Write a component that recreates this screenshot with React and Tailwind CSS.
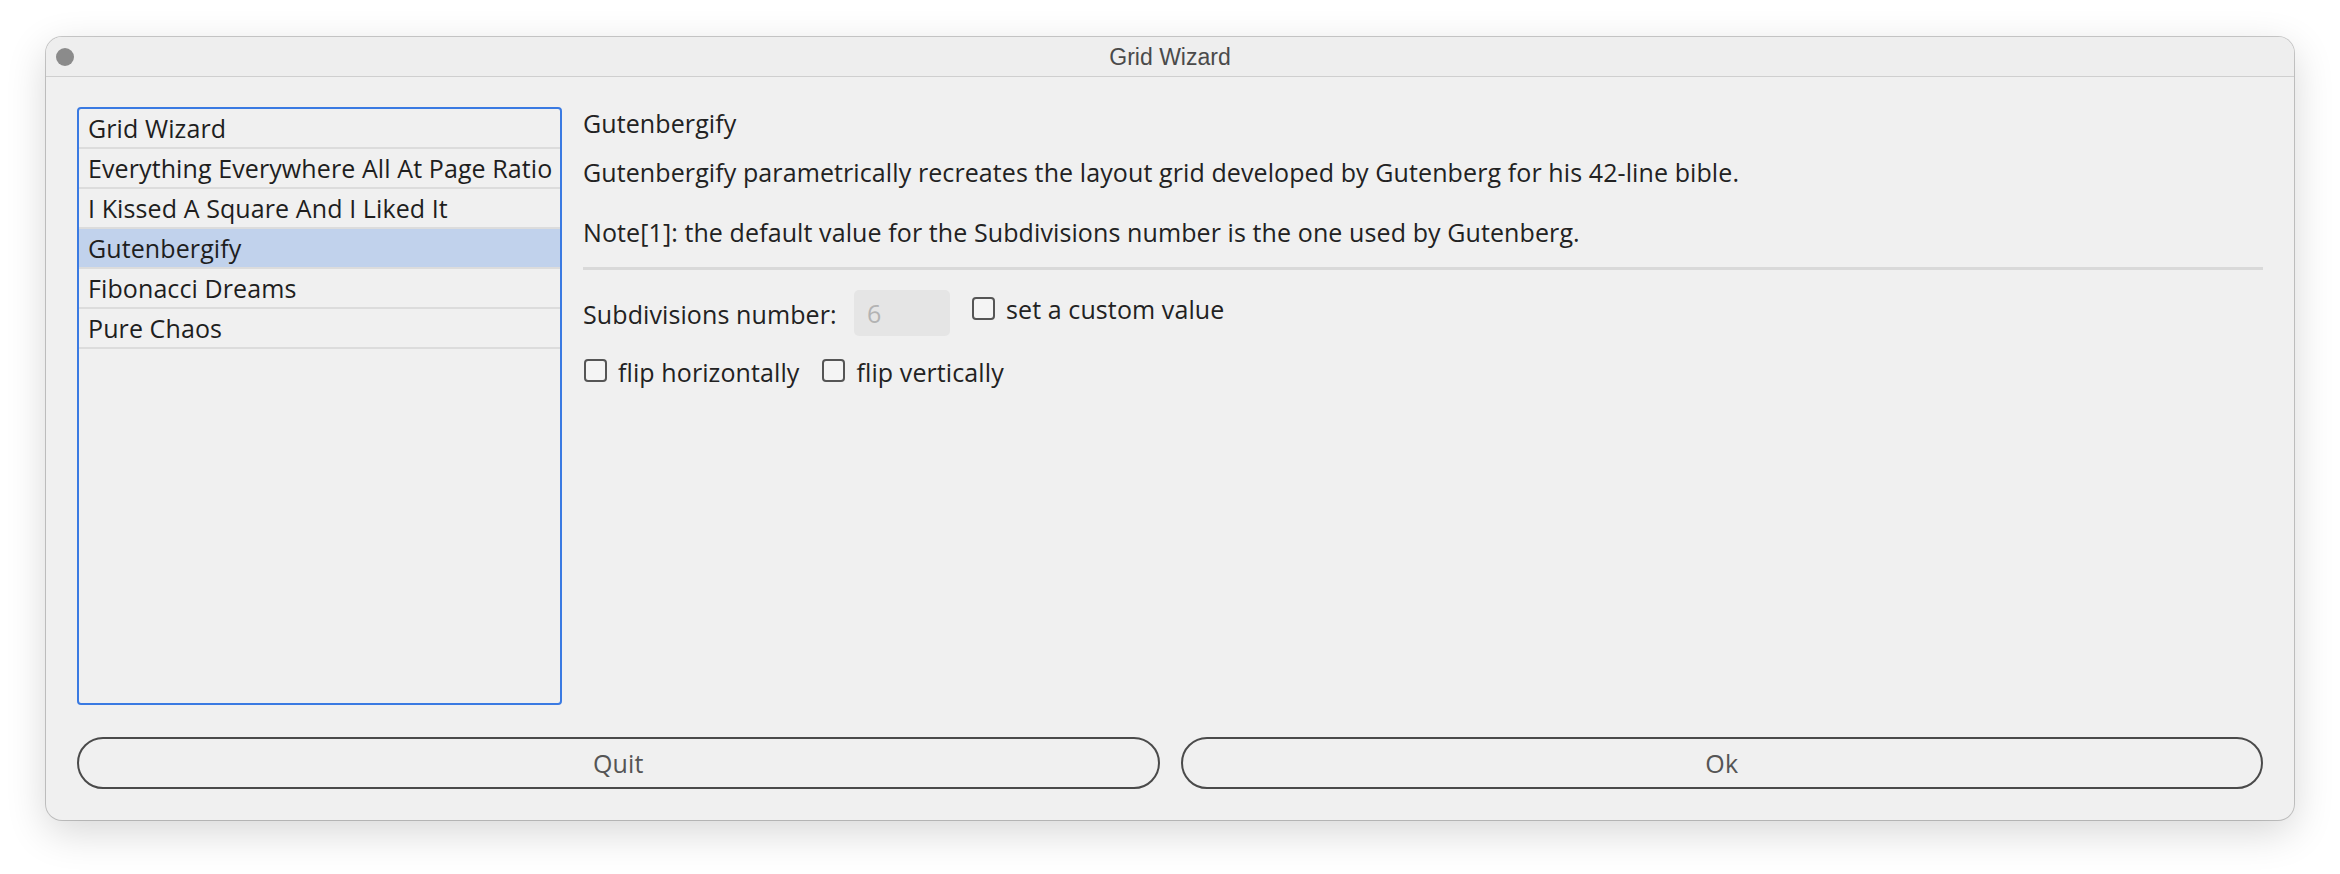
import React from "react";

const items = [
  "Grid Wizard",
  "Everything Everywhere All At Page Ratio",
  "I Kissed A Square And I Liked It",
  "Gutenbergify",
  "Fibonacci Dreams",
  "Pure Chaos",
];

const body = { fontFamily: '"Open Sans", "Noto Sans", sans-serif' };

const CheckBox = ({ className = "" }) => (
  <span
    className={`block w-[23px] h-[23px] shrink-0 rounded-[4px] border-2 border-[#555555] bg-[#f4f4f4] ${className}`}
  />
);

const App = () => {
  const selected = 3;

  return (
    <div className="min-h-screen bg-white pl-[46px] pt-[37px]" style={body}>
      <div className="w-[2248px] h-[783px] rounded-[16px] bg-[#f0f0f0] shadow-[0_0_0_1px_rgba(0,0,0,0.2),0_12px_40px_rgba(0,0,0,0.16)] flex flex-col overflow-hidden">
        {/* title bar */}
        <div className="h-[40px] shrink-0 grid grid-cols-[1fr_auto_1fr] items-center border-b border-[#cfcfcf] bg-[#eeeeee]">
          <div className="pl-[10px]">
            <span className="block w-[18px] h-[18px] rounded-full bg-[#8b8b8b]" />
          </div>
          <span
            className="text-[23px] leading-[28px] text-[#4a4a4a]"
            style={{ fontFamily: '"Liberation Sans", Arial, sans-serif' }}
          >
            Grid Wizard
          </span>
          <div />
        </div>

        {/* content */}
        <div className="flex-1 flex flex-col px-[31px] pt-[30px] pb-[31px] text-[25px] tracking-[0.1px]">
          <div className="flex h-[598px]">
            <div className="w-[485px] shrink-0 rounded-[4px] border-2 border-[#3a7ae2] flex flex-col">
              {items.map((item, i) => (
                <div
                  key={item}
                  className={`h-[40px] border-b-2 border-[#dcdcdc] pl-[9px] flex items-center leading-[32px] text-[#1e1e1e] ${
                    i === selected ? "bg-[#c1d2ec]" : ""
                  }`}
                >
                  {item}
                </div>
              ))}
            </div>

            <div className="flex-1 ml-[21px] flex flex-col leading-[32px] text-[#222222]">
              <div>Gutenbergify</div>
              <div className="mt-[17px]">
                Gutenbergify parametrically recreates the layout grid developed by Gutenberg for his 42-line bible.
              </div>
              <div className="mt-[28px]">
                Note[1]: the default value for the Subdivisions number is the one used by Gutenberg.
              </div>
              <div className="mt-[19px] h-[3px] bg-[#d9d9d9]" />

              <div className="mt-[20px] flex items-start">
                <div className="w-[271px] mt-[8px]">Subdivisions number:</div>
                <div className="w-[96px] h-[46px] rounded-[5px] bg-[#e5e5e5] pl-[13px] flex items-center text-[#b3b3b3]">
                  6
                </div>
                <CheckBox className="ml-[22px] mt-[7px]" />
                <div className="ml-[11px] mt-[3px]">set a custom value</div>
              </div>

              <div className="mt-[20px] flex items-start">
                <CheckBox className="ml-[1px] mt-[3px]" />
                <div className="ml-[11px]">flip horizontally</div>
                <CheckBox className="ml-[23px] mt-[3px]" />
                <div className="ml-[11px]">flip vertically</div>
              </div>
            </div>
          </div>

          <div className="mt-[32px] flex gap-[21px]">
            <button className="flex-1 h-[52px] rounded-full border-2 border-[#4a4a4a] leading-[32px] text-[#555555]">
              Quit
            </button>
            <button className="flex-1 h-[52px] rounded-full border-2 border-[#4a4a4a] leading-[32px] text-[#555555]">
              Ok
            </button>
          </div>
        </div>
      </div>
    </div>
  );
};

export default App;
